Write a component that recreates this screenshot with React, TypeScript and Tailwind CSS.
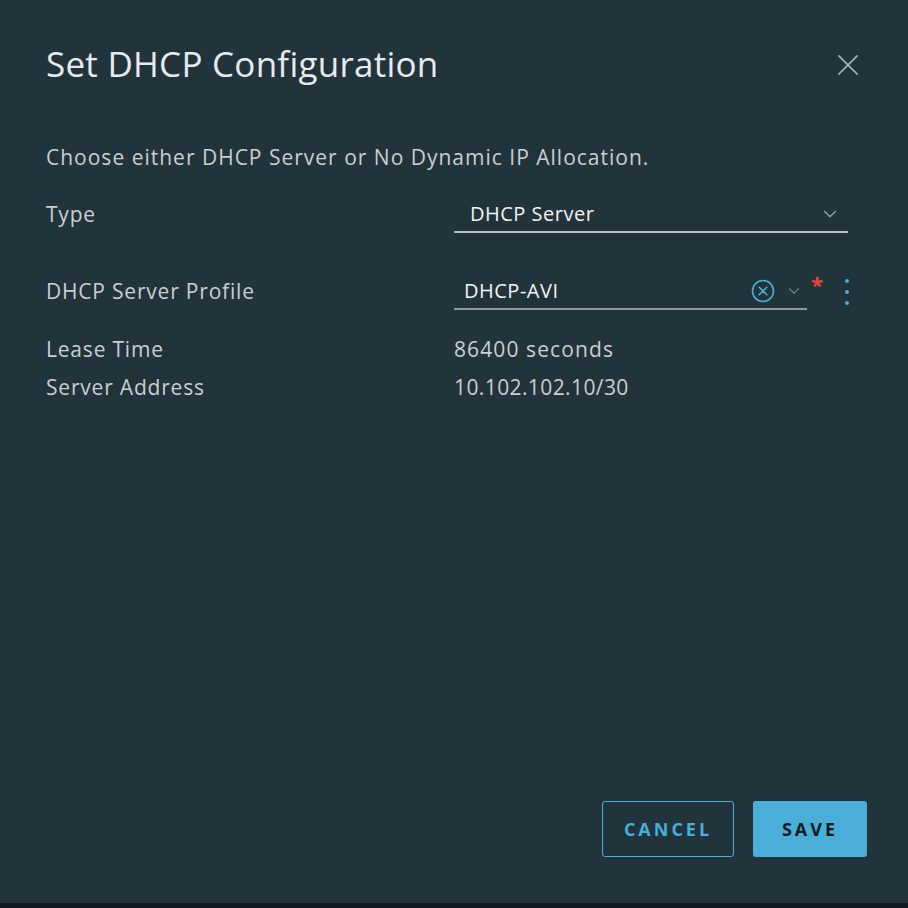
import { ChevronDown } from "lucide-react";

const font = { fontFamily: "'Open Sans', 'Liberation Sans', sans-serif" };

export default function App() {
  return (
    <div className="w-[908px] h-[908px] bg-[#21333b] flex flex-col" style={font}>
      <div className="flex-1 flex flex-col px-[46px] pt-[40px]">
        {/* header */}
        <div className="flex items-center justify-between">
          <h1 className="text-[35px] leading-[48px] text-[#e8ebed] tracking-[0.25px]">Set DHCP Configuration</h1>
          <button className="text-[#a9b2b7] mr-[3px] mt-[1px]">
            <svg width="22" height="22" viewBox="0 0 24 24">
              <path d="M2 2l20 20M22 2L2 22" stroke="currentColor" strokeWidth="1.7" strokeLinecap="round" />
            </svg>
          </button>
        </div>

        <p className="mt-[55px] text-[21px] leading-[28px] text-[#c9cfd2] tracking-[1px]">
          Choose either DHCP Server or No Dynamic IP Allocation.
        </p>

        {/* type */}
        <div className="mt-[26px] grid grid-cols-[408px_1fr] items-center">
          <span className="text-[21px] text-[#c9cfd2] tracking-[0.8px]">Type</span>
          <div className="flex items-center justify-between h-[36px] border-b-[2px] border-[#b7c0c5] pl-[16px] pr-[7px] w-[394px]">
            <span className="text-[20px] text-[#f2f4f5] font-medium tracking-[0.5px]">DHCP Server</span>
            <ChevronDown className="w-[22px] h-[22px] text-[#9aa5ab]" strokeWidth={1.5} />
          </div>
        </div>

        {/* profile */}
        <div className="mt-[41px] grid grid-cols-[408px_1fr] items-center">
          <span className="text-[21px] text-[#c9cfd2] tracking-[0.8px]">DHCP Server Profile</span>
          <div className="flex items-center">
            <div className="flex items-center h-[36px] border-b-[2px] border-[#8d989e] pl-[10px] pr-[4px] w-[353px]">
              <span className="flex-1 text-[20px] text-[#f2f4f5] font-medium tracking-[0.5px]">DHCP-AVI</span>
              <svg width="24" height="24" viewBox="0 0 24 24" className="text-[#49afd9]">
                <circle cx="12" cy="12" r="10.5" fill="none" stroke="currentColor" strokeWidth="1.6" />
                <path d="M8.2 8.2l7.6 7.6M15.8 8.2l-7.6 7.6" stroke="currentColor" strokeWidth="1.6" strokeLinecap="round" />
              </svg>
              <ChevronDown className="ml-[10px] w-[18px] h-[18px] text-[#6f7c83]" strokeWidth={1.6} />
            </div>
            <span className="self-start -mt-[1px] ml-[4px] text-[22px] leading-none text-[#e7443a] font-bold">*</span>
            <div className="ml-[22px] flex flex-col gap-[7px]">
              <span className="w-[4px] h-[4px] rounded-full bg-[#49afd9]" />
              <span className="w-[4px] h-[4px] rounded-full bg-[#49afd9]" />
              <span className="w-[4px] h-[4px] rounded-full bg-[#49afd9]" />
            </div>
          </div>
        </div>

        {/* details */}
        <div className="mt-[25px] grid grid-cols-[408px_1fr] gap-y-[10px] text-[21px] text-[#c9cfd2] leading-[28px] tracking-[0.8px]">
          <span>Lease Time</span>
          <span className="tracking-[1.1px]">86400 seconds</span>
          <span>Server Address</span>
          <span className="tracking-[0.4px]">10.102.102.10/30</span>
        </div>

        {/* footer */}
        <div className="mt-auto mb-[46px] flex justify-end gap-[19px] -mr-[5px]">
          <button className="w-[132px] h-[56px] rounded-[3px] border-[1.5px] border-[#49afd9] text-[#49afd9] text-[18px] font-bold tracking-[3px]">
            CANCEL
          </button>
          <button className="w-[114px] h-[56px] rounded-[3px] bg-[#49afd9] text-[#0e1a20] text-[18px] font-bold tracking-[3px]">
            SAVE
          </button>
        </div>
      </div>
      <div className="h-[5px] bg-[#141b1f]" />
    </div>
  );
}
